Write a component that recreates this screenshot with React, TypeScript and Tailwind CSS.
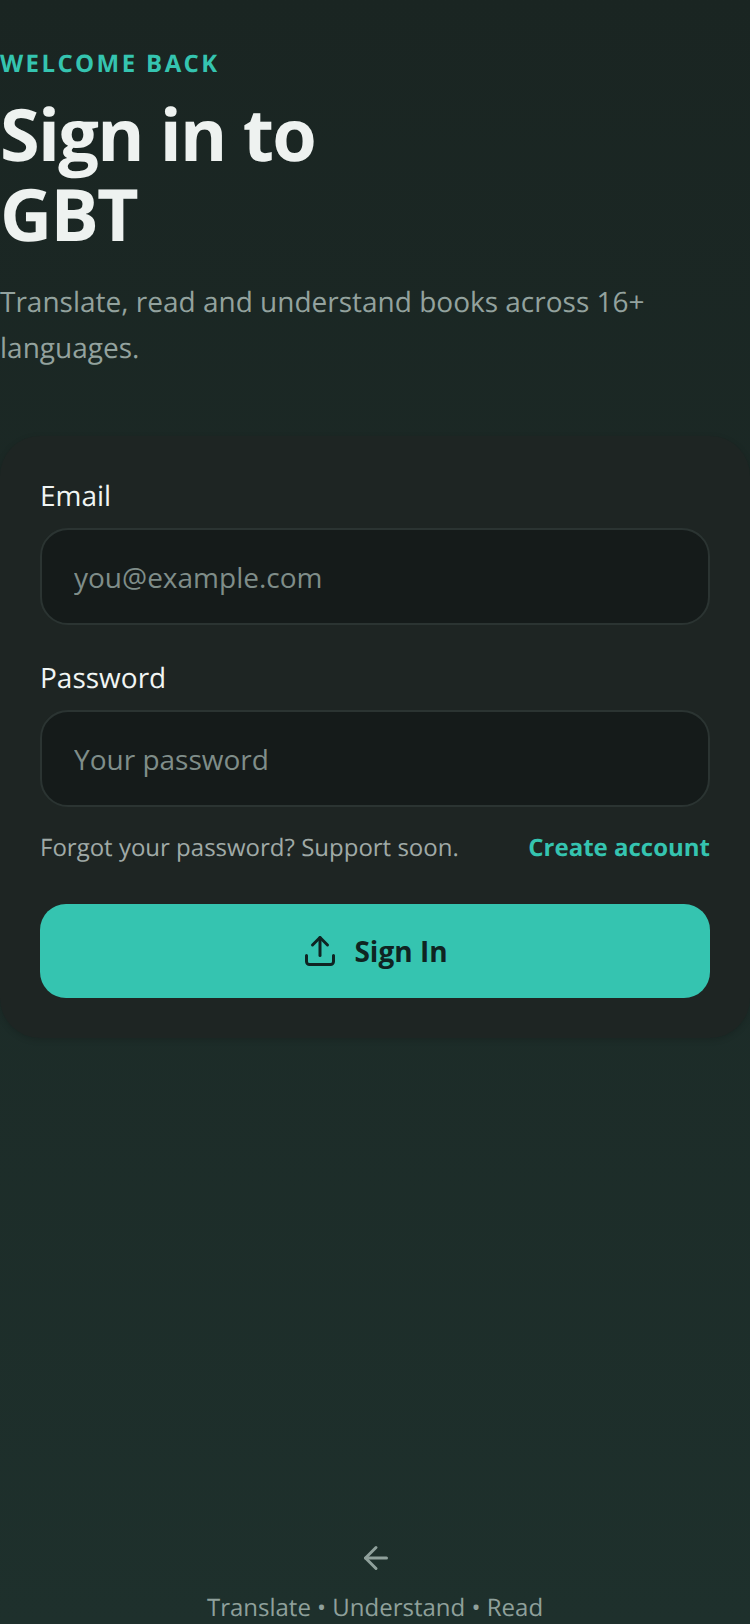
import { ArrowLeft, Upload } from 'lucide-react'

function Field({ label, placeholder, type }: { label: string; placeholder: string; type: string }) {
  return (
    <label className="block">
      <div className="text-[28px] leading-[38px] text-[#f1f5f3]">{label}</div>
      <input
        type={type}
        placeholder={placeholder}
        className="mt-[13px] block h-[97px] w-full rounded-[28px] border-2 border-[#2b3432] bg-[#151b1a] px-8 text-[28px] text-[#f1f5f3] outline-none placeholder:text-[#7f8d89]"
      />
    </label>
  )
}

export default function App() {
  return (
    <div className="flex min-h-[1624px] flex-col bg-gradient-to-b from-[#1a2522] to-[#1e302c] font-['Open_Sans',sans-serif] [text-rendering:geometricPrecision]">
      {/* Header */}
      <div className="pt-[47px]">
        <div className="text-[24px] leading-[33px] font-bold tracking-[2.4px] text-[#35c4b0]">WELCOME BACK</div>
        <h1 className="mt-[14px] text-[72px] leading-[80px] font-bold tracking-[-1.7px] text-[#eef2f0]">
          Sign in to
          <br />
          GBT
        </h1>
        <p className="mt-[25px] text-[28px] leading-[46px] text-[#93a29e]">
          Translate, read and understand books across 16+ languages.
        </p>
      </div>

      {/* Card */}
      <div className="mt-[65px] rounded-[40px] bg-[#1e2523] px-10 pt-[41px] pb-10 shadow-[0_2px_6px_rgba(0,0,0,0.15)]">
        <div className="flex flex-col gap-[34px]">
          <Field label="Email" placeholder="you@example.com" type="email" />
          <Field label="Password" placeholder="Your password" type="password" />
        </div>
        <div className="mt-[21px] flex items-center justify-between text-[24px] leading-[40px]">
          <span className="text-[#a0aaa7]">Forgot your password? Support soon.</span>
          <span className="font-bold text-[#35c4b0]">Create account</span>
        </div>
        <button
          type="button"
          className="mt-[36px] flex h-[94px] w-full items-center justify-center gap-4 rounded-[26px] bg-[#35c4b0] text-[28px] font-bold text-[#0f2422]"
        >
          <Upload size={36} strokeWidth={2} />
          Sign In
        </button>
      </div>

      {/* Footer */}
      <div className="mt-auto flex flex-col items-center">
        <ArrowLeft size={36} strokeWidth={2} className="ml-[2px] text-[#8fa09b]" />
        <div className="mt-[16px] text-[24px] leading-[32px] text-[#8fa09b]">Translate • Understand • Read</div>
      </div>
    </div>
  )
}
